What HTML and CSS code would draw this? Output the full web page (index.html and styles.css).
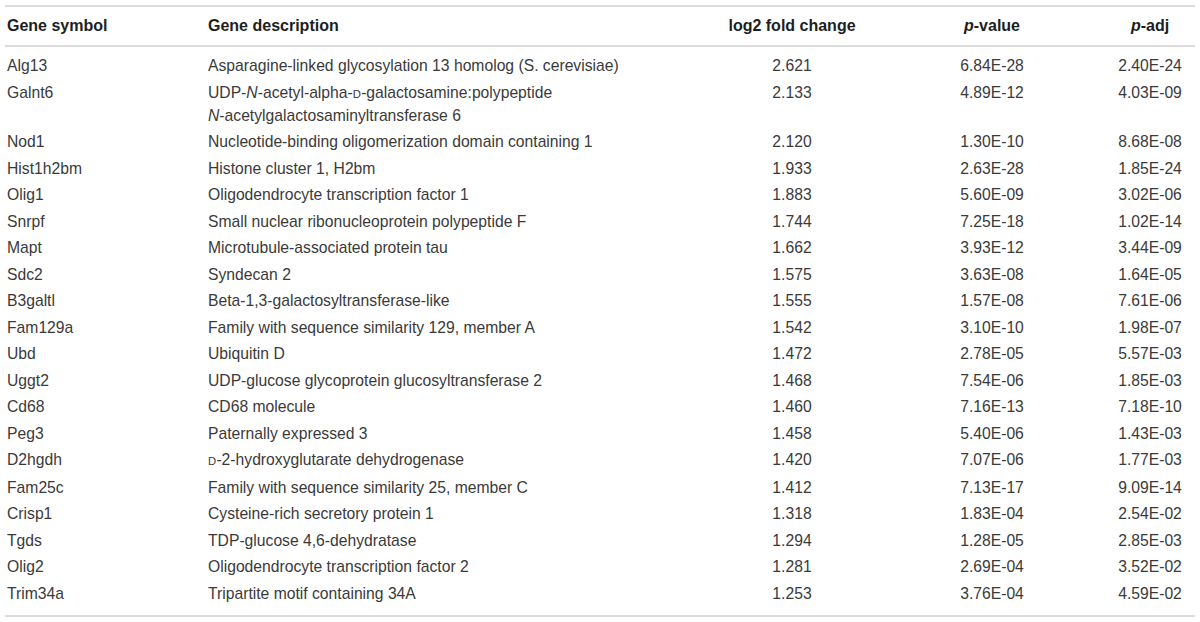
FILE: index.html
```html
<!DOCTYPE html>
<html lang="en">
<head>
<meta charset="utf-8">
<title>Gene table</title>
<link rel="stylesheet" href="styles.css">
</head>
<body>
<table class="genes">
  <colgroup>
    <col class="c-sym">
    <col class="c-desc">
    <col class="c-fc">
    <col class="c-p">
    <col class="c-padj">
  </colgroup>
  <thead>
    <tr>
      <th class="left">Gene symbol</th>
      <th class="left">Gene description</th>
      <th>log2 fold change</th>
      <th><i>p</i>-value</th>
      <th><i>p</i>-adj</th>
    </tr>
  </thead>
  <tbody>
    <tr><td>Alg13</td><td>Asparagine-linked glycosylation 13 homolog (S. cerevisiae)</td><td>2.621</td><td>6.84E-28</td><td>2.40E-24</td></tr>
    <tr><td>Galnt6</td><td>UDP-<i>N</i>-acetyl-alpha-<span class="sc">D</span>-galactosamine:polypeptide <span class="nw"><i>N</i>-acetylgalactosaminyltransferase 6</span></td><td>2.133</td><td>4.89E-12</td><td>4.03E-09</td></tr>
    <tr><td>Nod1</td><td>Nucleotide-binding oligomerization domain containing 1</td><td>2.120</td><td>1.30E-10</td><td>8.68E-08</td></tr>
    <tr><td>Hist1h2bm</td><td>Histone cluster 1, H2bm</td><td>1.933</td><td>2.63E-28</td><td>1.85E-24</td></tr>
    <tr><td>Olig1</td><td>Oligodendrocyte transcription factor 1</td><td>1.883</td><td>5.60E-09</td><td>3.02E-06</td></tr>
    <tr><td>Snrpf</td><td>Small nuclear ribonucleoprotein polypeptide F</td><td>1.744</td><td>7.25E-18</td><td>1.02E-14</td></tr>
    <tr><td>Mapt</td><td>Microtubule-associated protein tau</td><td>1.662</td><td>3.93E-12</td><td>3.44E-09</td></tr>
    <tr><td>Sdc2</td><td>Syndecan 2</td><td>1.575</td><td>3.63E-08</td><td>1.64E-05</td></tr>
    <tr><td>B3galtl</td><td>Beta-1,3-galactosyltransferase-like</td><td>1.555</td><td>1.57E-08</td><td>7.61E-06</td></tr>
    <tr><td>Fam129a</td><td>Family with sequence similarity 129, member A</td><td>1.542</td><td>3.10E-10</td><td>1.98E-07</td></tr>
    <tr><td>Ubd</td><td>Ubiquitin D</td><td>1.472</td><td>2.78E-05</td><td>5.57E-03</td></tr>
    <tr><td>Uggt2</td><td>UDP-glucose glycoprotein glucosyltransferase 2</td><td>1.468</td><td>7.54E-06</td><td>1.85E-03</td></tr>
    <tr><td>Cd68</td><td>CD68 molecule</td><td>1.460</td><td>7.16E-13</td><td>7.18E-10</td></tr>
    <tr><td>Peg3</td><td>Paternally expressed 3</td><td>1.458</td><td>5.40E-06</td><td>1.43E-03</td></tr>
    <tr><td>D2hgdh</td><td><span class="sc">D</span>-2-hydroxyglutarate dehydrogenase</td><td>1.420</td><td>7.07E-06</td><td>1.77E-03</td></tr>
    <tr><td>Fam25c</td><td>Family with sequence similarity 25, member C</td><td>1.412</td><td>7.13E-17</td><td>9.09E-14</td></tr>
    <tr><td>Crisp1</td><td>Cysteine-rich secretory protein 1</td><td>1.318</td><td>1.83E-04</td><td>2.54E-02</td></tr>
    <tr><td>Tgds</td><td>TDP-glucose 4,6-dehydratase</td><td>1.294</td><td>1.28E-05</td><td>2.85E-03</td></tr>
    <tr><td>Olig2</td><td>Oligodendrocyte transcription factor 2</td><td>1.281</td><td>2.69E-04</td><td>3.52E-02</td></tr>
    <tr><td>Trim34a</td><td>Tripartite motif containing 34A</td><td>1.253</td><td>3.76E-04</td><td>4.59E-02</td></tr>
  </tbody>
</table>
</body>
</html>
```

FILE: styles.css
```css
html, body {
  margin: 0;
  padding: 0;
  background: #ffffff;
}

body {
  font-family: "Liberation Sans", Arial, Helvetica, sans-serif;
  font-size: 16px;
  color: #3a3a3a;
}

.genes {
  margin: 5px 5px 0 5px;
  width: 1190px;
  table-layout: fixed;
  border-collapse: collapse;
  border-top: 2px solid #dcdcdc;
  border-bottom: 2px solid #dcdcdc;
}

.c-sym { width: 201px; }
.c-desc { width: 499px; }
.c-fc { width: 174px; }
.c-p { width: 226px; }
.c-padj { width: 90px; }

.genes th {
  font-weight: bold;
  color: #1e1e1e;
  text-align: center;
  height: 38px;
  padding: 0 2px;
  line-height: 20px;
  border-bottom: 2px solid #dcdcdc;
  vertical-align: middle;
}

.genes th.left { text-align: left; }

.genes td {
  padding: 2.25px 2px;
  line-height: 22px;
  font-size: 15.7px;
  text-align: center;
  vertical-align: top;
}

.genes td:nth-child(1),
.genes td:nth-child(2) {
  text-align: left;
}

.genes tbody tr:first-child td { padding-top: 8px; }
.genes tbody tr:last-child td { padding-bottom: 10px; }

.sc {
  font-size: 0.72em;
  letter-spacing: 0.02em;
}

.nw { white-space: nowrap; }
```
